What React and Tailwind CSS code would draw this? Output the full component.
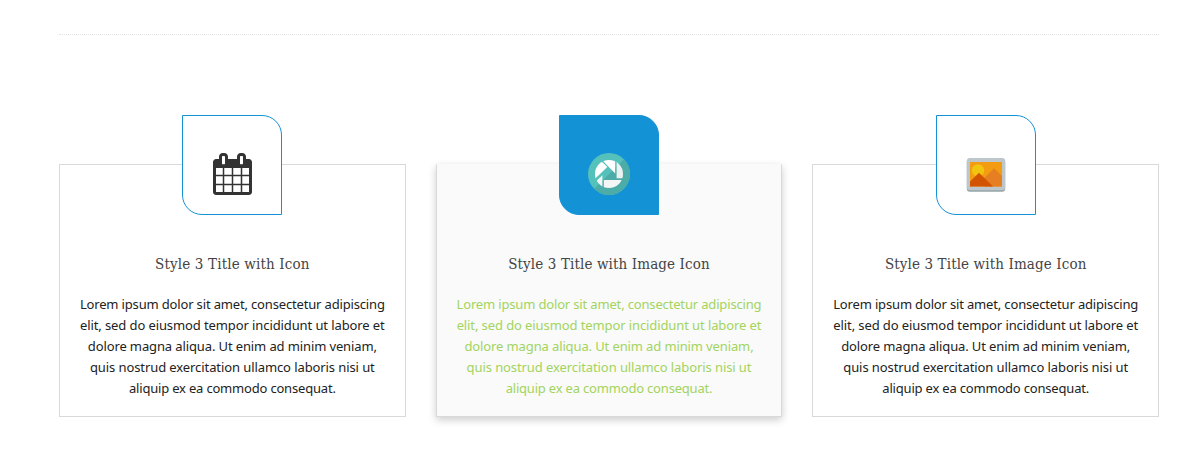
const LINES = [
  ['Lorem ipsum dolor sit amet, consectetur adipiscing', 'tracking-[-0.16px]'],
  ['elit, sed do eiusmod tempor incididunt ut labore et', 'tracking-[-0.1px]'],
  ['dolore magna aliqua. Ut enim ad minim veniam,', 'tracking-[-0.12px]'],
  ['quis nostrud exercitation ullamco laboris nisi ut', 'tracking-[-0.09px]'],
  ['aliquip ex ea commodo consequat.', 'tracking-[-0.19px]'],
];

function CalendarIcon() {
  return (
    <svg className="block h-[42px] w-[39px]" viewBox="0 0 1664 1792" fill="#333">
      <path d="M128 1664h288v-288h-288v288zm352 0h320v-288h-320v288zm-352-352h288v-320h-288v320zm352 0h320v-320h-320v320zm-352-384h288v-288h-288v288zm736 736h320v-288h-320v288zm-384-736h320v-288h-320v288zm768 736h288v-288h-288v288zm-384-352h320v-320h-320v320zm-352-864v-288q0-13-9.5-22.5t-22.5-9.5h-64q-13 0-22.5 9.5t-9.5 22.5v288q0 13 9.5 22.5t22.5 9.5h64q13 0 22.5-9.5t9.5-22.5zm736 864h288v-320h-288v320zm-384-384h320v-288h-320v288zm384 0h288v-288h-288v288zm32-480v-288q0-13-9.5-22.5t-22.5-9.5h-64q-13 0-22.5 9.5t-9.5 22.5v288q0 13 9.5 22.5t22.5 9.5h64q13 0 22.5-9.5t9.5-22.5zm384-64v1280q0 52-38 90t-90 38h-1408q-52 0-90-38t-38-90v-1280q0-52 38-90t90-38h128v-96q0-66 47-113t113-47h64q66 0 113 47t47 113v96h384v-96q0-66 47-113t113-47h64q66 0 113 47t47 113v96h128q52 0 90 38t38 90z" />
    </svg>
  );
}

function ShutterIcon() {
  return (
    <svg className="block size-[42px]" viewBox="0 0 42 42">
      <clipPath id="lens">
        <circle cx="21" cy="21" r="14" />
      </clipPath>
      <circle cx="21" cy="21" r="21" fill="#55c1bb" />
      <path d="M35.85 6.15A21 21 0 0 1 6.15 35.85z" fill="#4cada8" />
      <g clipPath="url(#lens)" fill="#fff">
        <path d="M16 5H27.2V20.4L15.5 8.5z" />
        <path d="M28.6 5H36V25.3H28.6z" fill="#edf1f1" />
        <path d="M15.8 27H36V36H15.8z" fill="#f4f5f5" />
        <path d="M14.4 22.3V36H4V32z" fill="#f4f5f5" />
        <path d="M14.5 9.3L19.3 14L6 26.8V8z" />
      </g>
    </svg>
  );
}

function PictureIcon() {
  return (
    <svg className="block h-[34px] w-[40px] translate-y-px" viewBox="0 0 40 34">
      <rect x="0.8" y="1.2" width="38.4" height="32.6" rx="3" fill="#95a5a6" />
      <rect x="0.8" y="0" width="38.4" height="32.2" rx="3" fill="#bdc7cb" />
      <rect x="4" y="4" width="32" height="24.5" fill="#f39c12" />
      <circle cx="12" cy="12.4" r="6.2" fill="#f1c40f" />
      <path d="M18.5 20L28 10.3L36 18V28.5H18.5z" fill="#e67e22" />
      <path d="M4 23.5L13 14.7L27 28.5H4z" fill="#d35400" />
    </svg>
  );
}

function Card({ title, titleClass, active, children }) {
  return (
    <article
      className={
        active
          ? 'flex h-[253px] w-[346.66px] flex-col items-center border border-[#d9d9d9] border-t-[#fafafa] bg-[#fafafa] shadow-[0_3px_8px_rgba(0,0,0,0.2)]'
          : 'flex h-[253px] w-[346.66px] flex-col items-center border border-[#d9d9d9] bg-white'
      }
    >
      <div
        className={
          active
            ? '-mt-[50px] flex size-[100px] shrink-0 items-center justify-center rounded-tr-[20px] rounded-bl-[20px] border border-[#1492d6] bg-[#1492d6] pt-[18px]'
            : '-mt-[50px] flex size-[100px] shrink-0 items-center justify-center rounded-tr-[20px] rounded-bl-[20px] border border-[#1492d6] bg-white pt-[18px]'
        }
      >
        {children}
      </div>
      <h3 className={`mt-[37px] h-6 whitespace-nowrap font-['DejaVu_Serif_Condensed','DejaVu_Serif',serif] text-[15px] leading-6 text-[#444] ${titleClass}`}>
        {title}
      </h3>
      <p
        className={`mt-[18px] text-center font-['Noto_Sans',sans-serif] text-[13px] leading-[21px] ${active ? 'text-[#a2d45e]' : 'text-[#222]'}`}
      >
        {LINES.map(([text, spacing]) => (
          <span key={text} className={`block whitespace-nowrap ${spacing}`}>
            {text}
          </span>
        ))}
      </p>
    </article>
  );
}

export default function App() {
  return (
    <main className="h-[473px] overflow-hidden bg-white pl-[59px] pt-[34px]">
      <hr className="w-[1100px] border-t border-dotted border-[#e4e4e4]" />
      <section className="mt-[129px] flex w-[1100px] justify-between">
        <Card title="Style 3 Title with Icon" titleClass="tracking-[0.15px]">
          <CalendarIcon />
        </Card>
        <Card title="Style 3 Title with Image Icon" titleClass="tracking-[0.12px]" active>
          <ShutterIcon />
        </Card>
        <Card title="Style 3 Title with Image Icon" titleClass="tracking-[0.12px]">
          <PictureIcon />
        </Card>
      </section>
    </main>
  );
}
